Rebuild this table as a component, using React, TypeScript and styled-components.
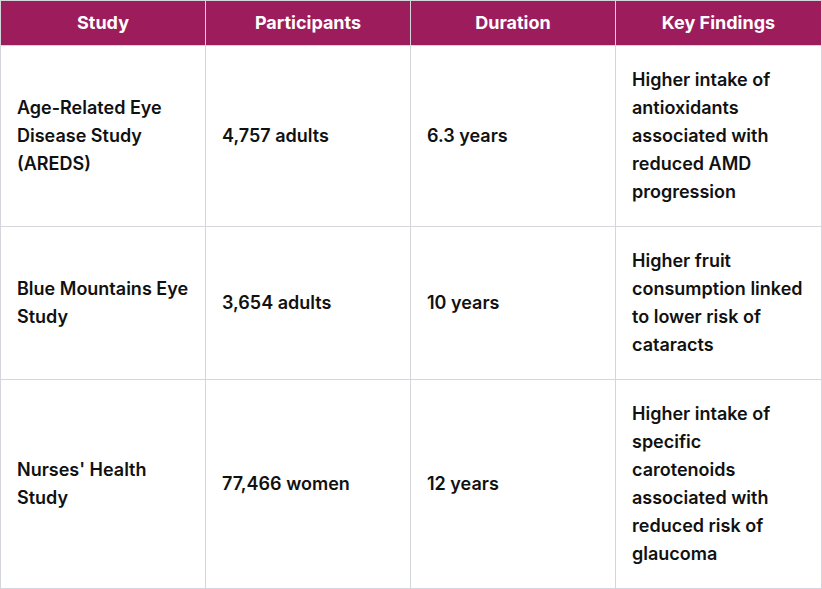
import styled, { createGlobalStyle } from 'styled-components';

const GlobalStyle = createGlobalStyle`
	body {
		margin: 0;
		background: #ffffff;
		font-family: Inter, "Noto Sans", sans-serif;
	}
`;

const rows = [
	{
		study: 'Age-Related Eye Disease Study (AREDS)',
		participants: '4,757 adults',
		duration: '6.3 years',
		findings: 'Higher intake of antioxidants associated with reduced AMD progression',
	},
	{
		study: 'Blue Mountains Eye Study',
		participants: '3,654 adults',
		duration: '10 years',
		findings: 'Higher fruit consumption linked to lower risk of cataracts',
	},
	{
		study: "Nurses' Health Study",
		participants: '77,466 women',
		duration: '12 years',
		findings: 'Higher intake of specific carotenoids associated with reduced risk of glaucoma',
	},
];

const Table = styled.table`
	width: 822px;
	border-collapse: collapse;
	table-layout: fixed;
	font-family: Inter, "Noto Sans", sans-serif;
	font-size: 18px;
	line-height: 28px;
	font-weight: 600;
	color: #111111;
`;

const Col = styled.col<{ $w?: number }>`
	width: ${(p) => (p.$w ? `${p.$w}px` : 'auto')};
`;

const HeadCell = styled.th`
	background: #9d1c5c;
	color: #ffffff;
	font-weight: 700;
	text-align: center;
	padding: 8px 16px;
	border: 1px solid #d4d6dc;
`;

const Cell = styled.td`
	padding: 20px 16px;
	border: 1px solid #d4d6dc;
	vertical-align: middle;
	text-align: left;
`;

const App = () => {
	return (
		<>
			<GlobalStyle />
			<Table>
				<colgroup>
					<Col $w={205} />
					<Col $w={205} />
					<Col $w={205} />
					<Col />
				</colgroup>
				<thead>
					<tr>
						<HeadCell>Study</HeadCell>
						<HeadCell>Participants</HeadCell>
						<HeadCell>Duration</HeadCell>
						<HeadCell>Key Findings</HeadCell>
					</tr>
				</thead>
				<tbody>
					{rows.map((r) => (
						<tr key={r.study}>
							<Cell>{r.study}</Cell>
							<Cell>{r.participants}</Cell>
							<Cell>{r.duration}</Cell>
							<Cell>{r.findings}</Cell>
						</tr>
					))}
				</tbody>
			</Table>
		</>
	);
};

export default App;
